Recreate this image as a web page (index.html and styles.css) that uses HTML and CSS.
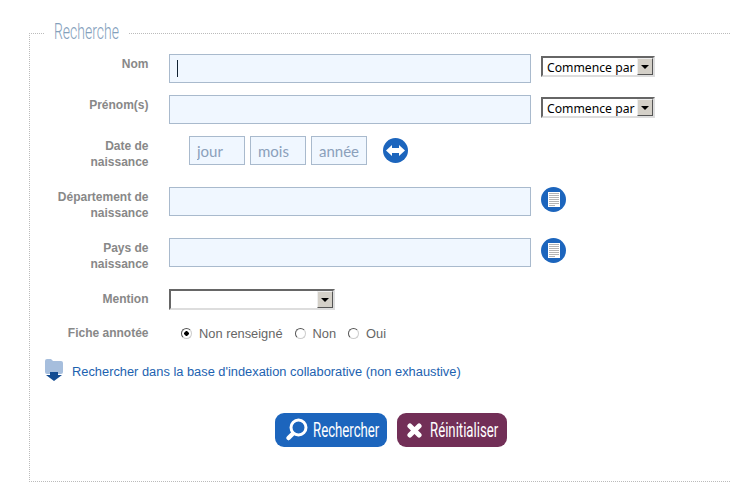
FILE: index.html
```html
<!DOCTYPE html>
<html lang="fr">
<head>
    <meta charset="UTF-8">
    <title>Recherche</title>
    <link rel="stylesheet" href="styles.css">
</head>
<body>
    <svg class="defs" width="0" height="0">
        <symbol id="doc" viewBox="0 0 25 25">
            <circle cx="12.5" cy="12.5" r="12.5" fill="#1c65bd"/>
            <rect x="7" y="5" width="12" height="15" fill="#fff"/>
            <path d="M8 6.500h10M8 8.500h10M8 10.500h10M8 12.500h10M8 14.500h10M8 16.500h10M8 18.500h6" stroke="#b4b4b4" stroke-width="1"/>
        </symbol>
    </svg>
    <form class="search-form">
        <fieldset class="box">
            <legend class="box-title"><span>Recherche</span></legend>

            <div class="row">
                <label class="row-label">Nom</label>
                <div class="field-wrap">
                    <input class="field" type="text">
                    <span class="caret"></span>
                </div>
                <div class="select select-small"><span class="select-text">Commence par</span><span class="select-btn"></span></div>
            </div>

            <div class="row">
                <label class="row-label">Prénom(s)</label>
                <input class="field" type="text">
                <div class="select select-small"><span class="select-text">Commence par</span><span class="select-btn"></span></div>
            </div>

            <div class="row row-tall">
                <label class="row-label">Date de<br>naissance</label>
                <div class="date-group">
                    <input class="field field-date" type="text" placeholder="jour">
                    <input class="field field-date" type="text" placeholder="mois">
                    <input class="field field-date" type="text" placeholder="année">
                </div>
                <svg class="round-icon icon-swap" width="25" height="25" viewBox="0 0 25 25">
                    <circle cx="12.5" cy="12.5" r="12.5" fill="#1c65bd"/>
                    <path d="M3 12.5l6-5.5v3h7v-3l6 5.500-6 5.500v-3H9v3z" fill="#fff"/>
                </svg>
            </div>

            <div class="row row-tall">
                <label class="row-label">Département de<br>naissance</label>
                <input class="field" type="text">
                <svg class="round-icon icon-doc" width="25" height="25"><use href="#doc"/></svg>
            </div>

            <div class="row row-tall">
                <label class="row-label">Pays de<br>naissance</label>
                <input class="field" type="text">
                <svg class="round-icon icon-doc" width="25" height="25"><use href="#doc"/></svg>
            </div>

            <div class="row row-mention">
                <label class="row-label">Mention</label>
                <div class="select select-wide"><span class="select-text"></span><span class="select-btn"></span></div>
            </div>

            <div class="row row-radio">
                <label class="row-label">Fiche annotée</label>
                <div class="radio-group">
                    <label class="radio-item"><input type="radio" name="annot" checked>Non renseigné</label>
                    <label class="radio-item"><input type="radio" name="annot">Non</label>
                    <label class="radio-item"><input type="radio" name="annot">Oui</label>
                </div>
            </div>

            <a class="index-link" href="#">
                <svg width="18" height="23" viewBox="0 0 18 23">
                    <path d="M0 3q0-2 2-2h4l2 2h8q2 0 2 2v9q0 2-2 2H2q-2 0-2-2z" fill="#a6bedd"/>
                    <path d="M5 14h8v3h4l-8 6-8-6h4z" fill="#134c92"/>
                </svg>
                <span>Rechercher dans la base d'indexation collaborative (non exhaustive)</span>
            </a>

            <div class="actions">
                <button class="btn btn-search" type="button">
                    <svg width="24" height="24" viewBox="0 0 24 24">
                        <circle cx="13.500" cy="9.500" r="7.500" fill="none" stroke="#fff" stroke-width="3"/>
                        <path d="M7.500 16l-4 4" stroke="#fff" stroke-width="4.500" stroke-linecap="round"/>
                    </svg>
                    <span class="btn-text">Rechercher</span>
                </button>
                <button class="btn btn-reset" type="button">
                    <svg width="15" height="15" viewBox="0 0 18 18">
                        <path d="M3.500 3.500l11 11M14.500 3.500l-11 11" stroke="#fff" stroke-width="6" stroke-linecap="round"/>
                    </svg>
                    <span class="btn-text">Réinitialiser</span>
                </button>
            </div>
        </fieldset>
    </form>
</body>
</html>
```

FILE: styles.css
```css
html, body {
    margin: 0;
    padding: 0;
    background-color: #fff;
    overflow: hidden;
}
body {
    height: 497px;
    font-family: "Liberation Sans", Arial, sans-serif;
    font-size: 12.85px;
    color: #666;
}
.defs {
    position: absolute;
}
.search-form {
    padding: 15px 0 0 29px;
    width: 701px;
}
.box {
    margin: 0;
    padding: 3px 0 0 0;
    height: 462px;
    box-sizing: content-box;
    border: 0;
    border-top: 1px dotted #bbb;
    border-left: 1px dotted #bbb;
    border-bottom: 1px dotted #bbb;
    min-width: 0;
}
.box-title {
    margin-left: 14px;
    padding: 0 10px;
    width: 65px;
    height: 36px;
    box-sizing: content-box;
    line-height: 34px;
    font-family: Roboto, sans-serif;
    font-weight: 300;
    font-size: 22px;
    color: #83a0bc;
    white-space: nowrap;
    overflow: hidden;
}
.box-title span {
    display: inline-block;
    transform: scaleX(0.635);
    transform-origin: left center;
}
.row {
    display: flex;
    align-items: flex-start;
    margin-bottom: 12px;
}
.row-tall {
    min-height: 39px;
}
.row-label {
    flex: none;
    width: 118.5px;
    padding-top: 2px;
    margin-right: 20.5px;
    text-align: right;
    font-size: 12px;
    font-weight: bold;
    line-height: 16px;
    color: #888;
}
.field {
    display: block;
    width: 362px;
    height: 29px;
    padding: 0 8px;
    box-sizing: border-box;
    border: 1px solid #a9bacd;
    background-color: #f0f7ff;
    font-family: Lato, sans-serif;
    font-size: 15px;
    color: #8ba0bb;
    outline: none;
}
.field::placeholder {
    color: #8ba0bb;
    opacity: 1;
}
.field-wrap {
    position: relative;
}
.caret {
    position: absolute;
    left: 8px;
    top: 6px;
    width: 1px;
    height: 17px;
    background-color: #123;
}
.date-group {
    display: flex;
    gap: 5px;
    margin-left: 20px;
}
.field-date {
    width: 56px;
    padding: 0 0 0 7px;
}
.round-icon {
    flex: none;
    margin: 2px 0 0 10px;
}
.icon-swap {
    margin-left: 16px;
}
.icon-doc {
    margin-top: 0;
}
.select {
    display: flex;
    align-items: center;
    justify-content: space-between;
    box-sizing: border-box;
    height: 21px;
    border: 2px solid;
    border-color: #666 #ddd #ddd #666;
    background-color: #fff;
    font-family: "Noto Sans", sans-serif;
    font-size: 12.2px;
    color: #000;
}
.select-small {
    width: 114px;
    margin: 2px 0 0 10px;
}
.select-wide {
    width: 166px;
    margin-left: 0;
}
.select-text {
    padding: 1px 0 0 4px;
    white-space: nowrap;
}
.select-btn {
    position: relative;
    flex: none;
    width: 16px;
    height: 17px;
    box-sizing: border-box;
    border: 1px solid;
    border-color: #eee #555 #555 #eee;
    background-color: #d4d0c8;
}
.select-btn::after {
    content: "";
    position: absolute;
    left: 3px;
    top: 6px;
    border: 4px solid transparent;
    border-top: 4px solid #000;
    border-bottom: 0;
}
.row-mention {
    margin-bottom: 15px;
}
.row-radio {
    align-items: center;
    margin-bottom: 0;
}
.row-radio .row-label {
    padding-top: 0;
}
.radio-group {
    display: flex;
    gap: 12px;
    margin-left: 12px;
}
.radio-item {
    display: flex;
    align-items: center;
    gap: 7px;
}
.radio-item input {
    appearance: none;
    flex: none;
    width: 11px;
    height: 11px;
    margin: 0;
    border: 1px solid;
    border-color: #555 #ccc #ccc #555;
    border-radius: 50%;
    background-color: #fff;
}
.radio-item input:checked {
    background: radial-gradient(circle, #000 0 2px, #fff 2.5px);
}
.index-link {
    display: flex;
    align-items: flex-start;
    gap: 9px;
    margin: 17px 0 0 15px;
    color: #1c62b0;
    text-decoration: none;
}
.index-link svg {
    flex: none;
}
.index-link span {
    margin-top: 7px;
    line-height: 14px;
}
.actions {
    display: flex;
    gap: 10px;
    margin: 32px 0 0 245px;
}
.btn {
    display: flex;
    align-items: center;
    height: 34px;
    padding: 0 0 0 10px;
    border: 0;
    border-radius: 9px;
    color: #fff;
    font-family: Roboto, sans-serif;
    font-size: 20px;
    overflow: hidden;
    cursor: pointer;
}
.btn svg {
    flex: none;
}
.btn-search {
    width: 112px;
    background-color: #1c65bd;
}
.btn-reset {
    width: 110px;
    background-color: #722f57;
}
.btn-text {
    display: block;
    margin-left: 4px;
    white-space: nowrap;
    transform: scaleX(0.66);
    transform-origin: left center;
}
.btn-reset .btn-text {
    margin-left: 8px;
}
```
